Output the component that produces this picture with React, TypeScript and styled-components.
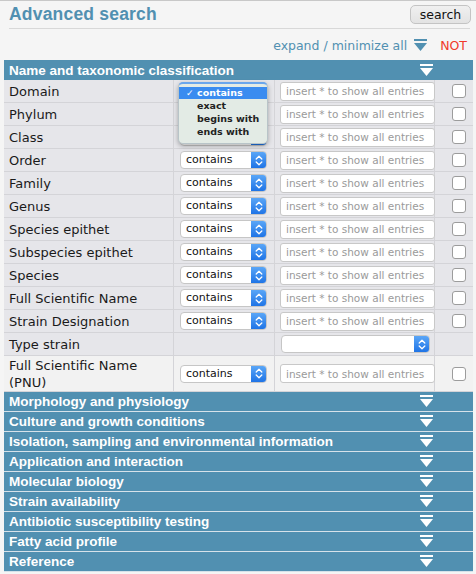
import React from 'react';
import styled, { createGlobalStyle } from 'styled-components';

const BLUE = '#5190b1';

const GlobalStyle = createGlobalStyle`
  html, body {
    margin: 0;
    padding: 0;
    background: #f5f5f5;
  }
  body {
    font-family: "DejaVu Sans", sans-serif;
    color: #1a1a1a;
  }
`;

const fields = [
  'Domain',
  'Phylum',
  'Class',
  'Order',
  'Family',
  'Genus',
  'Species epithet',
  'Subspecies epithet',
  'Species',
  'Full Scientific Name',
  'Strain Designation',
];

const sections = [
  'Morphology and physiology',
  'Culture and growth conditions',
  'Isolation, sampling and environmental information',
  'Application and interaction',
  'Molecular biology',
  'Strain availability',
  'Antibiotic susceptibility testing',
  'Fatty acid profile',
  'Reference',
];

function ExpandIcon({ color }: { color: string }) {
  return (
    <svg width="13" height="14" viewBox="0 0 13 14">
      <rect x="0" y="0" width="13" height="2" fill={color} />
      <path d="M0 4 H13 L6.5 12 Z" fill={color} />
    </svg>
  );
}

function Stepper() {
  return (
    <StepperBox>
      <svg width="8" height="11" viewBox="0 0 8 11">
        <path d="M1.2 4 L4 1.3 L6.8 4 M1.2 7 L4 9.7 L6.8 7" stroke="#fff" strokeWidth="1.3" fill="none" strokeLinecap="round" strokeLinejoin="round" />
      </svg>
    </StepperBox>
  );
}

// selects hidden under the open menu keep their box but not their label
function OperatorSelect({ covered }: { covered?: boolean }) {
  return (
    <SelectBox $width={87}>
      <SelectText>{covered ? '' : 'contains'}</SelectText>
      <Stepper />
    </SelectBox>
  );
}

function SectionHeader({ title }: { title: string }) {
  return (
    <HeaderBar>
      <HeaderTitle>{title}</HeaderTitle>
      <HeaderIcon>
        <ExpandIcon color="#fff" />
      </HeaderIcon>
    </HeaderBar>
  );
}

export default function App() {
  return (
    <Page>
      <GlobalStyle />
      <TitleBar>
        <Title>Advanced search</Title>
        <SearchButton>search</SearchButton>
      </TitleBar>
      <ExpandRow>
        <ExpandText>expand / minimize all</ExpandText>
        <ExpandIcon color={BLUE} />
        <NotLabel>NOT</NotLabel>
      </ExpandRow>

      <Table>
        <SectionHeader title="Name and taxonomic classification" />
        {fields.map((name, idx) => (
          <Row key={name}>
            <LabelCell>{name}</LabelCell>
            <Cell>
              <OperatorSelect covered={idx < 3} />
              {idx === 0 && (
                <Menu>
                  <MenuItem $active>
                    <Check>✓</Check>contains
                  </MenuItem>
                  <MenuItem>exact</MenuItem>
                  <MenuItem>begins with</MenuItem>
                  <MenuItem>ends with</MenuItem>
                </Menu>
              )}
            </Cell>
            <Cell>
              <TextInput placeholder="insert * to show all entries" />
            </Cell>
            <BoxCell>
              <CheckBox />
            </BoxCell>
          </Row>
        ))}
        <Row>
          <LabelCell>Type strain</LabelCell>
          <Cell />
          <Cell>
            <SelectBox $width={149}>
              <SelectText />
              <Stepper />
            </SelectBox>
          </Cell>
          <BoxCell />
        </Row>
        <Row $tall $light>
          <LabelCell>
            Full Scientific Name
            <br />
            (PNU)
          </LabelCell>
          <Cell>
            <OperatorSelect />
          </Cell>
          <Cell>
            <TextInput placeholder="insert * to show all entries" />
          </Cell>
          <BoxCell>
            <CheckBox />
          </BoxCell>
        </Row>
        {sections.map((s) => (
          <SectionHeader key={s} title={s} />
        ))}
      </Table>
    </Page>
  );
}

const Page = styled.div`
  width: 476px;
  height: 574px;
  box-sizing: border-box;
  border-top: 1px solid #c8c8c8;
  padding: 0 3px 0 4px;
  overflow: hidden;
`;

const TitleBar = styled.div`
  display: flex;
  justify-content: space-between;
  align-items: center;
  height: 27px;
  margin: 0 3px 0 5px;
  border-bottom: 1px solid #d8d8d8;
`;

const Title = styled.h1`
  margin: 0;
  font-family: "Liberation Sans", Arial, sans-serif;
  font-size: 17.5px;
  font-weight: 700;
  color: ${BLUE};
  letter-spacing: 0.2px;
`;

const SearchButton = styled.button`
  width: 61px;
  height: 19px;
  margin-right: -1px;
  padding: 0;
  border: 1px solid #c4c4c4;
  border-radius: 5px;
  background: linear-gradient(#f0f0f0, #e3e3e3);
  font-family: "DejaVu Sans", sans-serif;
  font-size: 12.5px;
  color: #111;
`;

const ExpandRow = styled.div`
  display: flex;
  justify-content: flex-end;
  align-items: center;
  height: 31px;
  padding: 2px 6px 0 0;
  box-sizing: border-box;
  svg {
    margin: 0 13px 0 7px;
  }
`;

const ExpandText = styled.span`
  font-size: 12.5px;
  color: ${BLUE};
`;

const NotLabel = styled.span`
  font-size: 12.5px;
  color: #f03a2a;
`;

const Table = styled.div`
  width: 469px;
  display: flex;
  flex-direction: column;
`;

const HeaderBar = styled.div`
  display: flex;
  align-items: center;
  height: 19px;
  background: ${BLUE};
  border-bottom: 1px solid #d6e2ea;
  color: #fff;
  padding-left: 5px;
  &:first-child {
    border-bottom: none;
    height: 20px;
  }
`;

const HeaderTitle = styled.span`
  flex: 1;
  font-family: "Liberation Sans", Arial, sans-serif;
  font-weight: 700;
  font-size: 13.5px;
`;

const HeaderIcon = styled.span`
  display: flex;
  width: 53px;
  svg {
    margin-top: 1px;
  }
`;

const Row = styled.div<{ $tall?: boolean; $light?: boolean }>`
  display: grid;
  grid-template-columns: 170px 101px 160px 1fr;
  height: ${(p) => (p.$tall ? 35 : 22)}px;
  border-bottom: 1px solid #d4d4d8;
  background: ${(p) => (p.$light ? '#f2f2f2' : '#e6e6ea')};
`;

const Cell = styled.div`
  position: relative;
  display: flex;
  align-items: center;
  padding-left: 5px;
  border-right: 1px solid #d4d4d8;
`;

const LabelCell = styled(Cell)`
  font-size: 13px;
  line-height: 17px;
`;

const BoxCell = styled.div`
  display: flex;
  align-items: center;
  padding-left: 17px;
`;

const SelectBox = styled.div<{ $width: number }>`
  display: flex;
  align-items: stretch;
  width: ${(p) => p.$width}px;
  height: 18px;
  margin-left: 1px;
  box-sizing: border-box;
  border: 1px solid #c6c6c6;
  border-radius: 4px;
  background: #fff;
  overflow: hidden;
`;

const SelectText = styled.span`
  flex: 1;
  padding-left: 5px;
  font-size: 11px;
  line-height: 16px;
  color: #111;
`;

const StepperBox = styled.span`
  display: flex;
  align-items: center;
  justify-content: center;
  width: 15px;
  background: linear-gradient(#5aa6f7, #1f74e6);
`;

const TextInput = styled.input`
  width: 155px;
  height: 19px;
  box-sizing: border-box;
  margin-right: -6px;
  padding: 0 5px;
  border: 1px solid #c8c8c8;
  border-radius: 3px;
  background: #fff;
  font-family: "DejaVu Sans", sans-serif;
  font-size: 10.5px;
  &::placeholder {
    color: #9a9a9a;
  }
`;

const CheckBox = styled.span`
  width: 12px;
  height: 12px;
  border: 1px solid #9c9c9c;
  border-radius: 3px;
  background: #fff;
`;

const Menu = styled.div`
  position: absolute;
  left: 4px;
  top: 2px;
  width: 90px;
  padding: 3px 0 5px;
  box-sizing: border-box;
  background: #e3ebe5;
  border: 1px solid #b8c4c8;
  border-top: 2px solid #6aa6ec;
  border-radius: 5px;
  box-shadow: 0 2px 5px rgba(0, 0, 0, 0.3);
  z-index: 5;
`;

const MenuItem = styled.div<{ $active?: boolean }>`
  position: relative;
  height: ${(p) => (p.$active ? 12 : 13)}px;
  line-height: ${(p) => (p.$active ? 12 : 13)}px;
  padding-left: 18px;
  font-size: 9.5px;
  font-weight: 600;
  color: ${(p) => (p.$active ? '#fff' : '#222')};
  background: ${(p) => (p.$active ? '#3a8cf0' : 'transparent')};
`;

const Check = styled.span`
  position: absolute;
  left: 7px;
  font-size: 9px;
`;
